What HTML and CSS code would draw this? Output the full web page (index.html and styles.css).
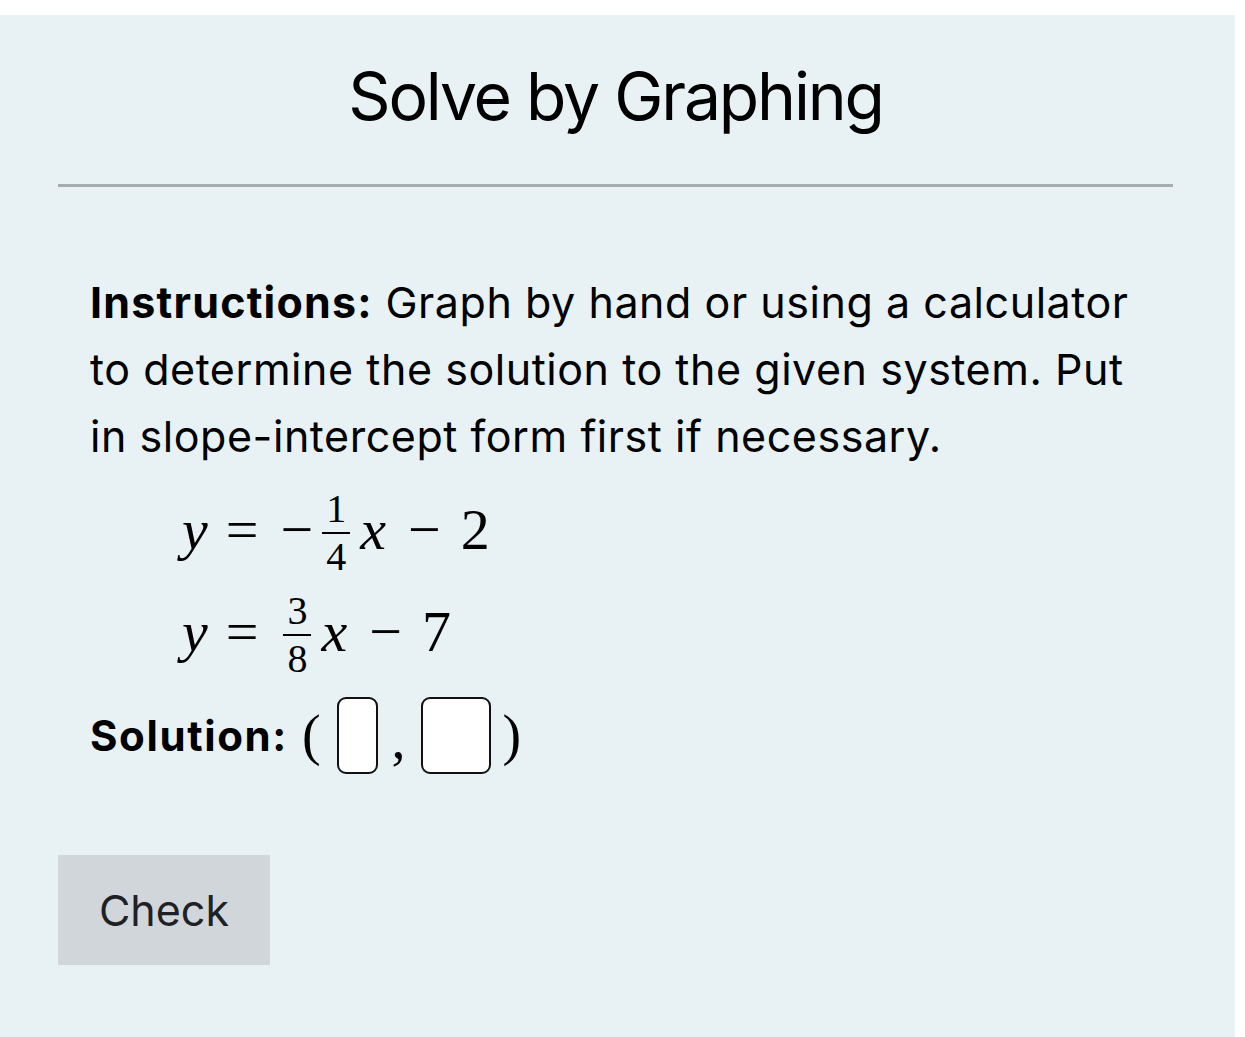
FILE: index.html
```html
<!DOCTYPE html>
<html lang="en">
<head>
<meta charset="utf-8">
<title>Solve by Graphing</title>
<link rel="stylesheet" href="styles.css">
</head>
<body>
<main class="panel">
  <h1 class="title">Solve by Graphing</h1>
  <hr class="rule">
  <section class="content">
    <p class="instructions"><strong>Instructions:</strong> Graph by hand or using a calculator to determine the solution to the given system. Put in slope-intercept form first if necessary.</p>
    <div class="equations">
      <div class="eq">
        <span class="mi">y</span><span class="mo rel">=</span><span class="mo neg">−</span><span class="frac"><span class="num">1</span><span class="den">4</span></span><span class="mi x">x</span><span class="mo bin">−</span><span class="mn">2</span>
      </div>
      <div class="eq">
        <span class="mi">y</span><span class="mo rel">=</span><span class="frac"><span class="num">3</span><span class="den">8</span></span><span class="mi x">x</span><span class="mo bin">−</span><span class="mn">7</span>
      </div>
    </div>
    <div class="solution">
      <strong class="sol-label">Solution:</strong>
      <span class="paren open">(</span><span class="box narrow"></span><span class="comma">,</span><span class="box wide"></span><span class="paren close">)</span>
    </div>
  </section>
  <button class="check" type="button">Check</button>
</main>
</body>
</html>
```
FILE: styles.css
```css
html, body {
  margin: 0;
  padding: 0;
  background: #ffffff;
}

body {
  font-family: Inter, "Noto Sans", "Liberation Sans", sans-serif;
  color: #000;
}

.panel {
  margin-top: 15px;
  width: 1235px;
  box-sizing: border-box;
  min-height: 1022px;
  background: #e8f2f4;
  padding: 38px 62px 40px 58px;
}

.title {
  margin: 0;
  text-align: center;
  font-weight: 400;
  font-size: 66px;
  line-height: 86px;
  letter-spacing: -2.2px;
  color: #000;
}

.rule {
  margin: 45px 0 0 0;
  border: 0;
  height: 3px;
  background: #a9acae;
}

.content {
  padding-left: 32px;
  margin-top: 82px;
}

.instructions {
  margin: 0;
  font-size: 43px;
  line-height: 67px;
  letter-spacing: 0.55px;
}

.instructions strong {
  font-weight: 700;
  letter-spacing: 1.2px;
}

.equations {
  padding-left: 92px;
  margin-top: 8px;
  font-family: "Liberation Serif", "Times New Roman", serif;
  font-size: 58px;
}

.eq {
  display: flex;
  align-items: center;
  height: 102px;
}

.mi {
  font-style: italic;
}

.rel {
  margin: 0 22px 0 18px;
}

.neg {
  margin-right: 6px;
}

.bin {
  margin: 0 20px 0 22px;
}

.x {
  margin-left: 7px;
}

.frac {
  display: inline-flex;
  flex-direction: column;
  align-items: center;
  font-size: 40px;
  line-height: 1;
  padding: 0 3px;
  margin-top: 8px;
}

.num {
  padding: 0 4px 3px;
  border-bottom: 2px solid #000;
}

.den {
  padding-top: 3px;
}

.solution {
  display: flex;
  align-items: center;
  margin-top: 8px;
  height: 90px;
}

.sol-label {
  font-size: 42px;
  font-weight: 700;
  letter-spacing: 1.6px;
  margin-right: 14px;
}

.paren, .comma {
  font-family: "Liberation Serif", "Times New Roman", serif;
  font-size: 56px;
}

.paren.open {
  margin-right: 16px;
}

.paren.close {
  margin-left: 12px;
}

.comma {
  margin: 0 15px 0 14px;
  padding-top: 8px;
}

.box {
  display: inline-block;
  box-sizing: border-box;
  height: 77px;
  background: #fff;
  border: 2.5px solid #111;
  border-radius: 9px;
}

.box.narrow {
  width: 41px;
}

.box.wide {
  width: 70px;
}

.check {
  display: block;
  margin-top: 75px;
  width: 212px;
  height: 110px;
  border: 0;
  border-radius: 0;
  background: #d1d6da;
  color: #1f2225;
  font-family: Inter, "Noto Sans", "Liberation Sans", sans-serif;
  font-size: 43px;
  padding: 0;
}
```
